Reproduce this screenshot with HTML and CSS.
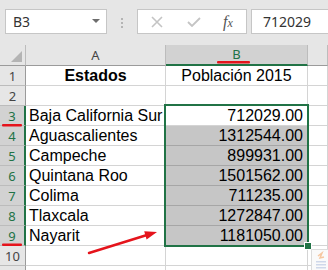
FILE: index.html
```html
<!DOCTYPE html>
<html lang="es">
<head>
  <meta charset="UTF-8">
  <title>Población 2015</title>
  <link rel="stylesheet" href="styles.css">
</head>
<body>
  <!-- Formula bar -->
  <div class="formula-bar">
    <div class="name-box">
      <span>B3</span>
      <svg class="caret" width="8" height="5" viewBox="0 0 8 5"><polygon points="0,0 8,0 4,4" fill="#6d6d6d"/></svg>
    </div>
    <div class="grip"><span></span><span></span><span></span></div>
    <div class="fx-buttons">
      <svg class="btn-cancel" width="12" height="12" viewBox="0 0 12 12"><path d="M1 1 L11 11 M11 1 L1 11" stroke="#c4c4c4" stroke-width="1.6"/></svg>
      <svg class="btn-enter" width="14" height="10" viewBox="0 0 14 10"><path d="M1 5 L5 9 L13 1" stroke="#c4c4c4" stroke-width="1.8" fill="none"/></svg>
      <span class="fx"><i>f</i><i class="fx-x">x</i></span>
    </div>
    <div class="formula-input">712029</div>
  </div>

  <!-- Sheet -->
  <div class="sheet">
    <div class="corner"><span class="corner-tri"></span></div>
    <div class="col-head">A</div>
    <div class="col-head active">B</div>
    <div class="col-head"></div>

    <div class="row-head">1</div>
    <div class="cell title">Estados</div>
    <div class="cell center">Población 2015</div>
    <div class="cell"></div>

    <div class="row-head">2</div>
    <div class="cell"></div>
    <div class="cell"></div>
    <div class="cell"></div>

    <div class="row-head active">3</div>
    <div class="cell">Baja California Sur</div>
    <div class="cell num">712029.00</div>
    <div class="cell"></div>

    <div class="row-head active">4</div>
    <div class="cell">Aguascalientes</div>
    <div class="cell num sel">1312544.00</div>
    <div class="cell"></div>

    <div class="row-head active">5</div>
    <div class="cell">Campeche</div>
    <div class="cell num sel">899931.00</div>
    <div class="cell"></div>

    <div class="row-head active">6</div>
    <div class="cell">Quintana Roo</div>
    <div class="cell num sel">1501562.00</div>
    <div class="cell"></div>

    <div class="row-head active">7</div>
    <div class="cell">Colima</div>
    <div class="cell num sel">711235.00</div>
    <div class="cell"></div>

    <div class="row-head active">8</div>
    <div class="cell">Tlaxcala</div>
    <div class="cell num sel">1272847.00</div>
    <div class="cell"></div>

    <div class="row-head active">9</div>
    <div class="cell">Nayarit</div>
    <div class="cell num sel">1181050.00</div>
    <div class="cell"></div>

    <div class="row-head">10</div>
    <div class="cell"></div>
    <div class="cell"></div>
    <div class="cell"></div>

    <div class="row-head"></div>
    <div class="cell"></div>
    <div class="cell"></div>
    <div class="cell"></div>
  </div>

  <!-- Selection B3:B9 -->
  <div class="selection"></div>
  <div class="fill-handle"></div>

  <!-- Annotations -->
  <svg class="marks" width="328" height="270" viewBox="0 0 328 270">
    <rect x="217" y="61" width="33" height="2.5" rx="1" fill="#e5141c"/>
    <rect x="2" y="124" width="20" height="2.5" rx="1" fill="#e5141c"/>
    <rect x="2" y="243.5" width="20" height="2.5" rx="1" fill="#e5141c"/>
    <line x1="89" y1="253" x2="147" y2="235" stroke="#e5141c" stroke-width="2.5" stroke-linecap="round"/>
    <polygon points="157,232 146.6,239.4 144.2,231.3" fill="#e5141c"/>
    <g class="quick">
      <rect x="311.5" y="249.5" width="20" height="22" fill="#fafafa" stroke="#dcdcdc"/>
      <path d="M318 256 L322 253 L320 258 L324 257" stroke="#f6c7a0" stroke-width="1.5" fill="none"/>
      <rect x="316" y="261" width="10" height="1.5" fill="#cfd8ea"/>
      <rect x="316" y="264" width="10" height="1.5" fill="#cfd8ea"/>
      <rect x="316" y="267" width="10" height="1.5" fill="#cfd8ea"/>
    </g>
  </svg>
</body>
</html>
```

FILE: styles.css
```css
/* Spreadsheet capture */
body {
  margin: 0;
  width: 328px;
  height: 270px;
  overflow: hidden;
  position: relative;
  background: #fff;
  font-family: 'Liberation Sans', Arial, sans-serif;
  color: #000;
}

/* Formula bar */
.formula-bar {
  height: 45px;
  box-sizing: border-box;
  padding-top: 9px;
  background: #e6e6e6;
  display: flex;
  align-items: flex-start;
}

.name-box,
.fx-buttons,
.formula-input {
  height: 25px;
  box-sizing: border-box;
  background: #fff;
  border: 1px solid #c6c6c6;
  display: flex;
  align-items: center;
  font-family: 'Noto Sans', 'Open Sans', sans-serif;
  font-size: 14px;
  color: #333;
}

.name-box {
  margin-left: 5px;
  width: 102px;
  padding: 0 6px 0 7px;
  justify-content: space-between;
}

.grip {
  display: flex;
  flex-direction: column;
  gap: 2px;
  margin: 9px 14px 0 14px;
}

.grip span {
  width: 2px;
  height: 2px;
  background: #b4b4b4;
}

.fx-buttons {
  width: 110px;
  padding-left: 13px;
}

.btn-enter {
  margin-left: 24px;
}

.fx {
  margin-left: 22px;
  font-family: 'Liberation Serif', serif;
  font-size: 16px;
  color: #555;
}

.fx-x {
  font-size: 12px;
}

.formula-input {
  flex: 1;
  margin-left: 4px;
  padding-left: 11px;
  border-right: none;
}

/* Sheet grid */
.sheet {
  height: 225px;
  overflow: hidden;
  display: grid;
  grid-template-columns: 26px 140px 142px 20px;
  grid-template-rows: 21px;
  grid-auto-rows: 20px;
}

.sheet > div {
  box-sizing: border-box;
  border-right: 1px solid #d4d4d4;
  border-bottom: 1px solid #d4d4d4;
}

.corner {
  position: relative;
  background: #e6e6e6;
  border-right-color: #bcbcbc !important;
  border-bottom-color: #9b9b9b !important;
}

.corner-tri {
  position: absolute;
  right: 3px;
  bottom: 3px;
  width: 0;
  height: 0;
  border-left: 11px solid transparent;
  border-bottom: 11px solid #b4b4b4;
}

.col-head {
  background: #e6e6e6;
  border-right-color: #bcbcbc !important;
  border-bottom-color: #9b9b9b !important;
  display: flex;
  align-items: flex-end;
  justify-content: center;
  padding-bottom: 1px;
  font-family: 'Noto Sans', 'Open Sans', sans-serif;
  font-size: 13px;
  line-height: 18px;
  color: #444;
}

.col-head.active {
  background: #d2d2d2;
  color: #217346;
  border-bottom: 2px solid #217346 !important;
}

.row-head {
  background: #e6e6e6;
  border-right-color: #9b9b9b !important;
  border-bottom-color: #bcbcbc !important;
  display: flex;
  align-items: flex-end;
  justify-content: center;
  font-family: 'Noto Sans', 'Open Sans', sans-serif;
  font-size: 13px;
  line-height: 18px;
  color: #444;
}

.row-head.active {
  background: #d2d2d2;
  color: #217346;
  border-right: 2px solid #217346 !important;
}

.cell {
  display: flex;
  align-items: flex-end;
  padding: 0 3px;
  font-size: 16px;
  line-height: 18px;
  white-space: nowrap;
}

.cell.title {
  justify-content: center;
  font-weight: bold;
}

.cell.center {
  justify-content: center;
}

.cell.num {
  justify-content: flex-end;
  padding-right: 4px;
}

.cell.sel {
  background: #c6c6c6;
  border-bottom-color: #a6a6a6 !important;
}

/* Selection overlay */
.selection {
  position: absolute;
  left: 164px;
  top: 104px;
  width: 145px;
  height: 143px;
  box-sizing: border-box;
  border: 2px solid #217346;
  pointer-events: none;
}

.fill-handle {
  position: absolute;
  left: 304px;
  top: 242px;
  width: 6px;
  height: 6px;
  background: #217346;
  border: 1px solid #fff;
}

.marks {
  position: absolute;
  left: 0;
  top: 0;
  pointer-events: none;
}
```
